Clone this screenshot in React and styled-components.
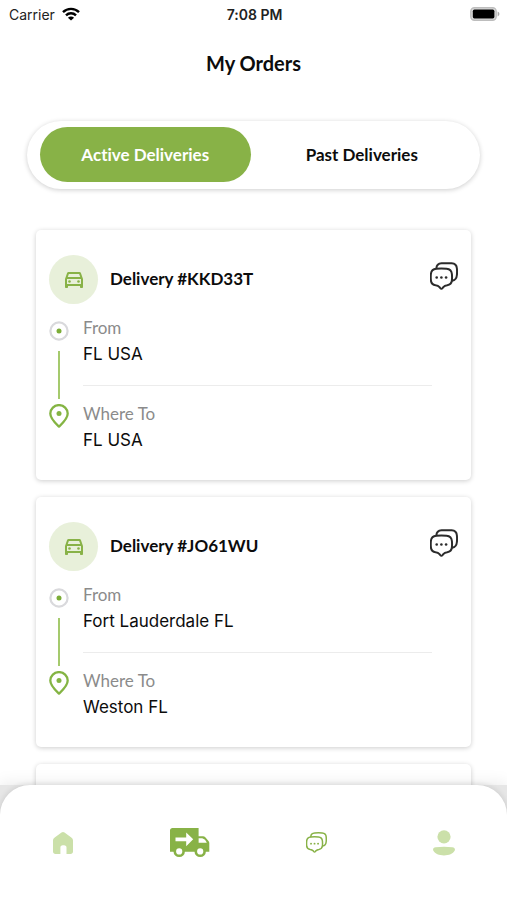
import React, { useState } from "react";
import styled, { createGlobalStyle } from "styled-components";

const GlobalStyle = createGlobalStyle`
  * {
    margin: 0;
    padding: 0;
    box-sizing: border-box;
  }

  body {
    background-color: #fff;
    color: #0c0c0c;
    font-family: Lato, "Open Sans", sans-serif;
    font-variant-ligatures: none;
  }

  button {
    font: inherit;
    color: inherit;
    background: none;
    border: none;
    cursor: pointer;
  }
`;

/* --- SCREEN --- */
const Screen = styled.div`
  display: flex;
  flex-direction: column;
  height: 100vh;
  background-color: #fff;
`;

/* --- STATUS BAR --- */
const StatusBar = styled.div`
  display: grid;
  grid-template-columns: 1fr auto 1fr;
  align-items: center;
  height: 28px;
  padding: 0 7px 0 9px;
  font-family: Inter, "Liberation Sans", sans-serif;
  font-size: 14px;
  color: #222;
`;

const Carrier = styled.div`
  display: flex;
  align-items: center;
  gap: 7px;
`;

const Clock = styled.div`
  font-weight: 600;
`;

const Battery = styled.svg`
  justify-self: end;
`;

/* --- HEADER --- */
const Title = styled.h1`
  padding: 20px 0 43px;
  font-size: 20px;
  line-height: 30px;
  font-weight: bold;
  text-align: center;
`;

/* --- TABS --- */
const Tabs = styled.div`
  display: flex;
  gap: 6px;
  margin: 0 27px 25px;
  padding: 6px 13px 7px;
  border-radius: 34px;
  background-color: #fff;
  box-shadow: 0 1px 5px rgba(0, 0, 0, 0.2);
`;

const Tab = styled.button`
  flex: 1;
  height: 55px;
  border-radius: 28px;
  font-size: 17px;
  font-weight: bold;

  &[aria-selected="true"] {
    background-color: #88b247;
    color: #fff;
  }
`;

/* --- CARDS --- */
const List = styled.main`
  flex: 1;
  min-height: 0;
  display: flex;
  flex-direction: column;
  gap: 17px;
  padding: 16px 36px;
  overflow-y: auto;
  scrollbar-width: none;
`;

const Card = styled.article`
  flex: none;
  min-height: 250px;
  padding: 25px 13px 27px;
  border-radius: 5px;
  background-color: #fff;
  box-shadow: 0 1px 5px rgba(0, 0, 0, 0.2);
`;

const CardHeader = styled.header`
  display: flex;
  align-items: center;
  gap: 12px;
`;

const Avatar = styled.div`
  display: flex;
  align-items: center;
  justify-content: center;
  width: 49px;
  height: 49px;
  border-radius: 50%;
  background-color: #e8f0da;
  color: #88b247;
`;

const CardTitle = styled.h2`
  flex: 1;
  font-size: 17px;
  line-height: 20px;
  font-weight: bold;
  padding-bottom: 2px;
`;

const ChatButton = styled.button`
  display: flex;
  align-items: center;
  padding-bottom: 7px;
  color: #2b2b2b;
`;

const Route = styled.div`
  display: flex;
  gap: 14px;
  padding: 11px 26px 0 0;
`;

const Rail = styled.div`
  display: flex;
  flex-direction: column;
  align-items: center;
  width: 20px;
  padding-top: 6px;
`;

const RailLine = styled.div`
  width: 2px;
  height: 48px;
  margin: 10px 0 5px;
  background-color: #a5ca6d;
`;

const Stops = styled.dl`
  flex: 1;
`;

const Stop = styled.div`
  & + & {
    margin-top: 18px;
    padding-top: 15px;
    border-top: 1px solid #ececec;
  }
`;

const StopLabel = styled.dt`
  font-size: 17px;
  line-height: 26px;
  color: #8b8b8b;
`;

const StopPlace = styled.dd`
  font-family: Inter, "Liberation Sans", sans-serif;
  font-size: 17px;
  line-height: 26px;
`;

/* --- BOTTOM NAV --- */
const NavShell = styled.div`
  position: relative;
  background-color: #e6e6e6;
  box-shadow: 0 0 16px rgba(0, 0, 0, 0.1);
`;

const Nav = styled.nav`
  display: grid;
  grid-template-columns: repeat(4, 1fr);
  height: 115px;
  border-radius: 30px 30px 0 0;
  background-color: #fff;
  box-shadow: 0 0 6px rgba(0, 0, 0, 0.14);
`;

const NavLink = styled.a`
  display: flex;
  align-items: center;
  justify-content: center;
  color: ${({ $active }) => ($active ? "#88b247" : "#cbe0a9")};
`;

/* --- ICONS --- */
const WifiIcon = () => (
  <svg width="18" height="14" viewBox="0 0 18 14" fill="none" stroke="#000" strokeWidth="2.4">
    <path d="M1 5.2C5.4.8 12.6.8 17 5.2" />
    <path d="M4 8.4c2.8-2.8 7.2-2.8 10 0" />
    <path d="M9 13.6 5.9 10.7c1.7-1.6 4.5-1.6 6.2 0z" fill="#000" stroke="none" />
  </svg>
);

const BatteryIcon = () => (
  <Battery width="30" height="14" viewBox="0 0 30 14" role="img" aria-label="Battery full">
    <rect x="0.8" y="0.8" width="25.4" height="12.4" rx="3.6" fill="#ddd" stroke="#bdbdbd" strokeWidth="1.4" />
    <rect x="2.8" y="2.6" width="21.6" height="8.8" rx="1.6" fill="#000" />
    <path d="M27.6 4.6c2.4.8 2.400 4 0 4.800z" fill="#aaa" />
  </Battery>
);

const CarIcon = () => (
  <svg width="18" height="16" viewBox="3 5 18 16" fill="currentColor">
    <path d="M18.92 6.01C18.72 5.42 18.16 5 17.5 5h-11c-.66 0-1.21.42-1.42 1.01L3 12v8c0 .55.45 1 1 1h1c.55 0 1-.45 1-1v-1h12v1c0 .55.45 1 1 1h1c.55 0 1-.45 1-1v-8zM6.85 7h10.29l1.08 3.11H5.77zM19 17H5v-5h14z" />
    <circle cx="7.5" cy="14.5" r="1.3" />
    <circle cx="16.5" cy="14.5" r="1.3" />
  </svg>
);

const ChatIcon = ({ size = 28 }) => (
  <svg width={size} height={size} viewBox="0 0 28 28" fill="none" stroke="currentColor" strokeWidth="2" strokeLinejoin="round" strokeLinecap="round">
    <path d="M6.4 6.300C6.500 3.300 8.400 1.500 11.600 1.300c3.400-.2 6.800-.2 10 0 3.300.2 5.100 2 5.300 5.200.2 2.200.2 4.400 0 6.500-.3 3.500-1.600 5.300-4.700 5.700" />
    <path d="M6.200 6.700c3.400-.3 7-.3 10.400 0 3.300.3 5 2 5.300 5.300.2 2.200.2 4.400 0 6.400-.3 2.800-1.900 4.400-4.700 4.800-1.800.2-2.900.7-3.900 1.900l-.8 1c-.6.7-1.600.7-2.200 0l-.8-1c-1-1.200-2.100-1.700-3.900-1.900-2.800-.4-4.400-2-4.700-4.800-.2-2-.2-4.200 0-6.400.3-3.300 2-5 5.300-5.300z" />
    <g fill="currentColor" stroke="none">
      <circle cx="6.700" cy="15.500" r="1.300" />
      <circle cx="11.400" cy="15.500" r="1.300" />
      <circle cx="16.100" cy="15.500" r="1.300" />
    </g>
  </svg>
);

const StartIcon = () => (
  <svg width="20" height="20" viewBox="0 0 20 20" fill="none">
    <circle cx="10" cy="10" r="8.6" stroke="#d9d9dc" strokeWidth="2.2" />
    <circle cx="10" cy="10" r="2.5" fill="#7cad38" />
  </svg>
);

const PinIcon = () => (
  <svg width="20" height="24" viewBox="0 0 20 24" fill="none">
    <path d="M10 22.6C6.8 19.6 1.3 15 1.3 9.6a8.7 8.5 0 0 1 17.4 0c0 5.4-5.5 10-8.7 13z" stroke="#84b443" strokeWidth="2.3" strokeLinejoin="round" />
    <circle cx="10" cy="9.6" r="2.5" fill="#84b443" />
  </svg>
);

const HomeIcon = () => (
  <svg width="20" height="22" viewBox="0 0 20 22" fill="currentColor">
    <path d="M8.5.6c.9-.7 2.1-.7 3 0l6.8 4.9C19.4 6.3 20 7.3 20 8.6v10.9c0 1.5-1 2.500-2.500 2.500h-4v-6.600c0-1.200-.8-2.200-2.500-2.200h-1.200c-1.600 0-2.400 1-2.400 2.200V22H2.500C1 22 0 21 0 19.500V8.600c0-1.300.6-2.300 1.700-3.100z" />
  </svg>
);

const TruckIcon = () => (
  <svg width="40" height="30" viewBox="0 0 40 30">
    <path d="M2.500 0h26.100v8.200h4.400c1 0 1.700.3 2.300 1l3.200 3.800c.5.600.8 1.300.8 2.100v8.700H0V2.500C0 1 1 0 2.500 0z" fill="currentColor" />
    <path d="M28.600 14.800v-4.600h3.600c2.200.6 3.700 2.200 4.600 4.600z" fill="#fff" />
    <path d="M5.500 9.600h10.700V4.500l7 6.800-7 6.900v-5H5.500z" fill="#fff" />
    <circle cx="9.200" cy="23.400" r="4.400" fill="#fff" stroke="currentColor" strokeWidth="2.600" />
    <circle cx="30.200" cy="23.400" r="4.400" fill="#fff" stroke="currentColor" strokeWidth="2.600" />
  </svg>
);

const ProfileIcon = () => (
  <svg width="22" height="26" viewBox="0 0 22 26" fill="currentColor">
    <circle cx="11" cy="6.8" r="6.6" />
    <path d="M2.600 17.200c5.600-.7 11.200-.7 16.800 0 2.200.3 3.100 1.900 2.200 3.600-1.600 2.900-5.600 4.600-10.600 4.600S2 23.700.4 20.800c-.9-1.700 0-3.300 2.200-3.600z" />
  </svg>
);

const orders = [
  { id: "KKD33T", from: "FL USA", to: "FL USA" },
  { id: "JO61WU", from: "Fort Lauderdale FL", to: "Weston FL" },
];

const OrderCard = ({ order }) => (
  <Card>
    <CardHeader>
      <Avatar>
        <CarIcon />
      </Avatar>
      <CardTitle>Delivery #{order.id}</CardTitle>
      <ChatButton type="button" aria-label="Chat">
        <ChatIcon />
      </ChatButton>
    </CardHeader>
    <Route>
      <Rail>
        <StartIcon />
        <RailLine />
        <PinIcon />
      </Rail>
      <Stops>
        <Stop>
          <StopLabel>From</StopLabel>
          <StopPlace>{order.from}</StopPlace>
        </Stop>
        <Stop>
          <StopLabel>Where To</StopLabel>
          <StopPlace>{order.to}</StopPlace>
        </Stop>
      </Stops>
    </Route>
  </Card>
);

export default function App() {
  const [tab, setTab] = useState("active");

  return (
    <Screen>
      <GlobalStyle />
      <StatusBar>
        <Carrier>
          Carrier
          <WifiIcon />
        </Carrier>
        <Clock>7:08 PM</Clock>
        <BatteryIcon />
      </StatusBar>
      <Title>My Orders</Title>
      <Tabs role="tablist">
        <Tab type="button" role="tab" aria-selected={tab === "active"} onClick={() => setTab("active")}>
          Active Deliveries
        </Tab>
        <Tab type="button" role="tab" aria-selected={tab === "past"} onClick={() => setTab("past")}>
          Past Deliveries
        </Tab>
      </Tabs>
      <List>
        {orders.map((order) => (
          <OrderCard key={order.id} order={order} />
        ))}
        <Card aria-hidden="true" />
      </List>
      <NavShell>
        <Nav>
          <NavLink href="#home" aria-label="Home">
            <HomeIcon />
          </NavLink>
          <NavLink href="#orders" aria-label="Orders" aria-current="page" $active>
            <TruckIcon />
          </NavLink>
          <NavLink href="#chats" aria-label="Chats" $active>
            <ChatIcon size={21} />
          </NavLink>
          <NavLink href="#profile" aria-label="Profile">
            <ProfileIcon />
          </NavLink>
        </Nav>
      </NavShell>
    </Screen>
  );
}
